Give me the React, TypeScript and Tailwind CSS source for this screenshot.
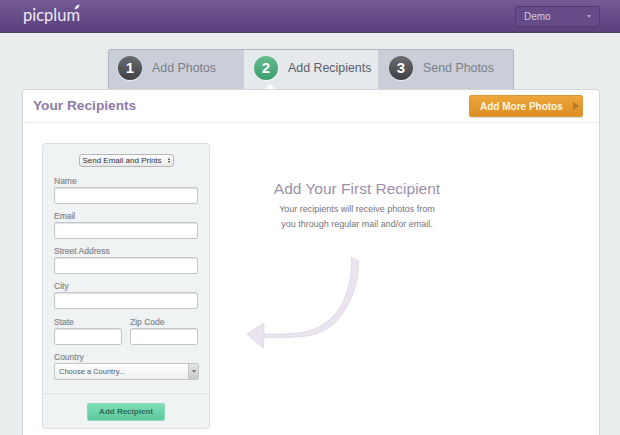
const sans = "font-['Liberation_Sans',Arial,sans-serif]";

function Step({ n, label, active, className }: { n: string; label: string; active?: boolean; className: string }) {
  return (
    <div className={`relative flex h-full items-center pb-[3px] ${className} ${active ? "bg-[#e6e9ec]" : "bg-[#c9ced9]"}`}>
      <div
        className={`flex h-6 w-6 items-center justify-center rounded-full text-[15px] font-bold text-white shadow-[0_1px_1px_rgba(255,255,255,0.7)] ${
          active ? "bg-gradient-to-b from-[#65bb8c] to-[#3b9d6c]" : "bg-gradient-to-b from-[#6b6d71] to-[#3f4044]"
        }`}
      >
        {n}
      </div>
      <span className={`ml-[10px] whitespace-nowrap text-[12.4px] ${active ? "text-[#5b6068]" : "text-[#7a7f8a]"}`}>{label}</span>
      {active && (
        <div className="absolute bottom-[-1px] left-[20px] h-0 w-0 border-x-[6px] border-b-[6px] border-x-transparent border-b-white" />
      )}
    </div>
  );
}

const labelClass = "flex h-[18px] items-center pt-[7px] text-[8.5px] text-[#868a92] [-webkit-text-stroke:0.2px_#868a92]";

function Field({ label, className = "" }: { label: string; className?: string }) {
  return (
    <div className={`flex flex-col ${className}`}>
      <label className={labelClass}>{label}</label>
      <div className="h-[17px] rounded-[2px] border border-[#c4c6c8] bg-white shadow-[inset_0_1px_1px_rgba(0,0,0,0.12)]" />
    </div>
  );
}

function Arrow() {
  return (
    <svg width="120" height="95" viewBox="0 0 120 95" className="mt-[25px] ml-[35px] block">
      <path
        d="M106.3 1.3 L113.5 4.7 C114 26 107 45 95.7 60.3 C85 74.5 70 80 55.7 80.6 C42 81.8 30 81.8 19 81.5 L18.3 92.3 L1.7 78 L19 67 L19 78 C32 78.5 45 78 55.7 76.8 C68 75 82 68.5 91.7 56.3 C102 42 107.5 22 106.3 1.3 Z"
        fill="#e9e4ee"
        stroke="#d9d3df"
        strokeWidth="0.7"
        strokeLinejoin="round"
      />
    </svg>
  );
}

export default function App() {
  return (
    <div className={`flex h-[435px] w-[620px] flex-col overflow-hidden bg-[#e9edee] ${sans}`}>
      <header className="flex h-[33px] shrink-0 items-center justify-between border-b border-[#4b3f5c] bg-gradient-to-b from-[#745b96] to-[#593f7c] pl-[23px] pr-[20px]">
        <div className="relative pb-[2px] font-['Lato',sans-serif] text-[16.5px] leading-none text-[#eeeaf3]">
          picplum
          <svg width="6" height="6" viewBox="0 0 7 7" className="absolute right-[0px] top-[-3px]">
            <path d="M0.5 6.5 C1 3 3.5 1 6.5 0.5 C6.5 3.5 4 6 0.5 6.5 Z" fill="#eeeaf3" />
          </svg>
        </div>
        <div className="flex h-[21px] w-[85px] items-center justify-between rounded-[2px] border border-[#523a70] bg-[#654b87] pl-[8px] pr-[8px] text-[10px] text-[#d5cde0]">
          Demo
          <div className="h-0 w-0 border-x-[2.5px] border-t-[3px] border-x-transparent border-t-[#b3a6c4]" />
        </div>
      </header>

      <main className="flex flex-1 flex-col pt-[16px]">
        <div className="ml-[108px] mr-[106px] flex h-[40px] shrink-0 overflow-hidden rounded-t-[3px] border border-b-0 border-[#aeb4c0]">
          <Step n="1" label="Add Photos" className="w-[135px] pl-[9px]" />
          <Step n="2" label="Add Recipients" active className="w-[134px] pl-[10px]" />
          <Step n="3" label="Send Photos" className="flex-1 pl-[11px]" />
        </div>

        <section className="relative ml-[22px] mr-[20px] flex-1 rounded-t-[4px] border border-b-0 border-[#d5d8db] bg-white">
          <div className="flex h-[33px] items-center justify-between border-b border-[#eceef0] pl-[10px] pr-[16px]">
            <h1 className="text-[13.7px] font-bold text-[#8d7ba6]">Your Recipients</h1>
            <button className="flex h-[22px] w-[114px] items-center whitespace-nowrap rounded-[2px] border border-[#d59a3a] bg-gradient-to-b from-[#eda73a] to-[#dc8d22] pl-[10px] text-[10px] font-bold text-[#fff6e4] shadow-[0_1px_1px_rgba(0,0,0,0.15)]">
              Add More Photos
              <span className="ml-[10px] h-0 w-0 border-y-[4px] border-l-[6px] border-y-transparent border-l-[#b47a28]" />
            </button>
          </div>

          <div className="flex pl-[19px] pt-[20px]">
            <div className="flex h-[286px] w-[168px] shrink-0 flex-col rounded-[3px] border border-[#dcdfe1] bg-[#f0f3f4]">
              <div className="flex-1 px-[11px] pt-[10px]">
                <div className="mx-auto flex h-[13px] w-[95px] items-center justify-center gap-[6px] rounded-[3px] border border-[#b4b6b8] bg-gradient-to-b from-white to-[#e8e8e8] text-[8px] text-[#2f3136]">
                  Send Email and Prints
                  <span className="flex flex-col gap-[1px]">
                    <span className="h-0 w-0 border-x-[1.5px] border-b-[2px] border-x-transparent border-b-[#333]" />
                    <span className="h-0 w-0 border-x-[1.5px] border-t-[2px] border-x-transparent border-t-[#333]" />
                  </span>
                </div>
                <div className="mt-[2px] flex flex-col">
                  <Field label="Name" />
                  <Field label="Email" />
                  <Field label="Street Address" />
                  <Field label="City" />
                  <div className="mt-[1px] flex gap-[8px]">
                    <Field label="State" className="w-[68px]" />
                    <Field label="Zip Code" className="w-[68px]" />
                  </div>
                  <div className="flex flex-col">
                    <label className={labelClass}>Country</label>
                    <div className="flex h-[17px] w-[145px] items-center justify-between overflow-hidden rounded-[2px] border border-[#c2c4c6] bg-gradient-to-b from-white to-[#f0f0f0] pl-[4px] text-[7.5px] text-[#55585e]">
                      Choose a Country...
                      <div className="flex h-full w-[10px] items-center justify-center border-l border-[#c2c4c6] bg-gradient-to-b from-[#e6e6e6] to-[#c8c8c8]">
                        <div className="h-0 w-0 border-x-[2px] border-t-[3px] border-x-transparent border-t-[#777]" />
                      </div>
                    </div>
                  </div>
                </div>
              </div>
              <div className="flex h-[35px] items-start justify-center border-t border-[#e2e5e7] pt-[9px]">
                <button className="h-[18px] w-[78px] rounded-[2px] border border-[#8ed5b5] bg-gradient-to-b from-[#7fe0b8] to-[#5cc79c] text-[8px] font-bold text-[#2f6b55]">
                  Add Recipient
                </button>
              </div>
            </div>

            <div className="flex w-[294px] flex-col pt-[36px]">
              <div className="text-center">
                <h2 className="text-[15.5px] leading-[20px] text-[#9d90a9]">Add Your First Recipient</h2>
                <p className="mt-[3px] text-[9px] leading-[14.5px] text-[#72757b]">
                  Your recipients will receive photos from
                  <br />
                  you through regular mail and/or email.
                </p>
              </div>
              <Arrow />
            </div>
          </div>
        </section>
      </main>
    </div>
  );
}
